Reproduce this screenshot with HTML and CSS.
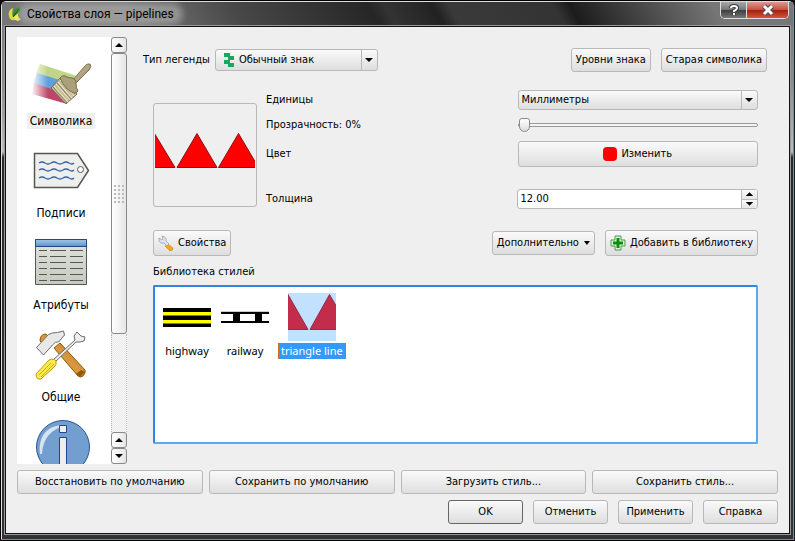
FILE: index.html
```html
<!DOCTYPE html>
<html lang="ru">
<head>
<meta charset="utf-8">
<title>Свойства слоя — pipelines</title>
<link rel="stylesheet" href="styles.css">
</head>
<body>
<div class="window">
  <header class="titlebar">
    <svg class="app-icon" viewBox="0 0 14 16"><path d="M5 2C2 3 0 6 1 10c0 3 3 5 6 4l3 1-1-4 2-5-3 1-2 4c-2 0-2-5-1-9z" fill="#d8e234"/><path d="M6 9l3-2 2 5 2 1-3 2-3-2z" fill="#eef25a"/><path d="M5 11C4 6 7 3 9 2l3-1v4c-1 2-4 4-7 6z" fill="#2e8b1e"/><path d="M5 11l6-8" stroke="#103c08"/></svg>
    <h1 class="title">Свойства слоя — pipelines</h1>
    <div class="caption-buttons">
      <button class="caption help" aria-label="Справка по окну"><svg viewBox="0 0 12 12"><path d="M3 4q0-2 3-2t3 2q0 1.500-3 3v1M6 9v2" fill="none" stroke="#333b48" stroke-width="4"/><path d="M3 4q0-2 3-2t3 2q0 1.500-3 3v1M6 9v2" fill="none" stroke="#fff" stroke-width="2"/></svg></button>
      <button class="caption close" aria-label="Закрыть"><svg viewBox="0 0 12 12"><path d="M2 2l8 8M10 2l-8 8" stroke="#4b4a5c" stroke-width="5"/><path d="M2 2l8 8M10 2l-8 8" stroke="#fff" stroke-width="3"/></svg></button>
    </div>
  </header>
  <div class="client">
    <div class="workspace">
      <div class="sidebar">
        <nav class="sections">
          <a class="section selected" href="#symbology">
            <svg viewBox="0 0 64 64">
              <defs><linearGradient id="fade"><stop offset="0" stop-color="#fff"/><stop offset="1" stop-color="#fff" stop-opacity="0"/></linearGradient><linearGradient id="handle" x1="0" y1="0" x2="1" y2="1"><stop offset="0" stop-color="#d2c6a2"/><stop offset="1" stop-color="#8f8564"/></linearGradient></defs>
              <path d="M11 18l37 12-11 10-30-13z" fill="#c0d587"/><path d="M8 27l26 8-10 11-20-8z" fill="#5e9fdd"/><path d="M5 37l20 7 13 14-35-10z" fill="#bd4768"/>
              <path d="M2 16h17v36H2z" fill="url(#fade)"/>
              <path d="M44 34l11-13q3-4 6-3 2 2-1 6L47 37z" fill="url(#handle)" stroke="#7b7154"/>
              <path d="M22 42l10-11 16 17-11 10z" fill="#c6bb96" stroke="#7b7154"/>
              <path d="M25 40l14 16M27 38l14 16M29 36l14 16M31 34l14 16" stroke="#f1ecd4"/><path d="M24 41l14 16M28 37l14 16" stroke="#8a8062"/>
              <path d="M31 32q3-4 7-1 3 1 6 1 4 3 3 6 0 4 2 7-2 3-4 2-9-3-14-15z" fill="#aaa07a" stroke="#756b4e"/>
            </svg><span>Символика</span>
          </a>
          <a class="section" href="#labels">
            <svg viewBox="0 0 64 64"><path d="M5.500 15.500h43l11 17-11 17h-43z" fill="#eeeeec" stroke="#555753" stroke-width="1.500"/><circle cx="51.500" cy="31.500" r="3" fill="#fff" stroke="#555753"/><path d="M10 25q3-2 6 0t6 0 6 0 6 0 6 0 5 0M10 32q3-2 6 0t6 0 6 0 6 0 6 0 5 0M10 40q3-2 6 0t6 0 6 0 6 0 6 0 5 0" fill="none" stroke="#3465a4" stroke-width="1.300"/></svg><span>Подписи</span>
          </a>
          <a class="section" href="#attributes">
            <svg viewBox="0 0 64 64"><defs><linearGradient id="tbl" x2="0" y2="1"><stop offset="0" stop-color="#e2e4de"/><stop offset="1" stop-color="#c6c9c0"/></linearGradient><linearGradient id="head" x2="0" y2="1"><stop offset="0" stop-color="#a4c6ea"/><stop offset="1" stop-color="#5a93cc"/></linearGradient></defs><path d="M6.500 9.500h51v45h-51z" fill="url(#tbl)" stroke="#555753"/><path d="M6.500 9.500h51v7h-51z" fill="url(#head)" stroke="#204a87"/><path d="M10 20.500h8m3 0h16m4 0h13M10 26.500h8m3 0h16m4 0h13M10 32.500h8m3 0h16m4 0h13M10 38.500h8m3 0h16m4 0h13M10 44.500h8m3 0h16m4 0h13M10 50.500h8m3 0h16m4 0h13" stroke="#555753"/></svg><span>Атрибуты</span>
          </a>
          <a class="section" href="#general">
            <svg viewBox="0 0 64 64"><defs><linearGradient id="wood" x1="0" y1="1" x2="1" y2="0"><stop offset="0" stop-color="#b06d12"/><stop offset=".5" stop-color="#d99843"/><stop offset="1" stop-color="#a9660c"/></linearGradient></defs><path d="M11 19q0-7 6-7l4 4-7 6zM25 26l6-5 25 27q1 3-2 6-3 2-5 0z" fill="url(#wood)" stroke="#8f5902"/><path d="M52 48l4 2-5 5-4-3z" fill="#8f5902"/><path d="M7.500 25.500l12-13q3-2 9-2l6-1.500 1 4-6 7q-3-1-6 3l-9 10z" fill="#e8e8e6" stroke="#6b6d69"/><path d="M24 38l22-20-1-4 3-4 4 4 4 1-1 4-4 1-4 0-21 20z" fill="#eeeeec" stroke="#6b6d69"/><path d="M7 52l13-14q5-2 7 1 1 4-2 6L12 57q-5 1-5-5z" fill="#fce94f" stroke="#c4a000"/><path d="M10 53l12-12M12 55l13-13" stroke="#d1b112"/></svg><span>Общие</span>
          </a>
          <a class="section" href="#metadata" aria-label="Метаданные">
            <svg viewBox="0 0 64 64"><circle cx="34" cy="33" r="26.500" fill="#729fcf" stroke="#2a5796"/><path d="M11 40C9 22 18 10 38 11 22 15 14 24 13 40z" fill="#d7e3ef"/><path d="M30.500 11.500h7v7h-7zM30.500 23.500h7v32h-7z" fill="#eeeeec" stroke="#204a87"/></svg>
          </a>
        </nav>
        <div class="scrollbar">
          <button class="step" aria-label="Вверх"><i class="arrow up"></i></button>
          <div class="thumb"><i class="grip"></i></div>
          <div class="track"></div>
          <button class="step" aria-label="Вверх"><i class="arrow up"></i></button>
          <button class="step" aria-label="Вниз"><i class="arrow"></i></button>
        </div>
      </div>
      <main class="panel">
        <div class="legend-row">
          <label for="legend">Тип легенды</label>
          <span class="combo legend-combo">
            <svg class="combo-icon" viewBox="0 0 12 16"><path d="M1 1h6v4H1zM5 4h6v4H5zM1 8h6v4H1zM5 11h6v4H5z" fill="#16a85c"/></svg>
            <select id="legend"><option>Обычный знак</option></select>
            <i class="arrow"></i>
          </span>
          <button class="btn first-action">Уровни знака</button>
          <button class="btn">Старая символика</button>
        </div>
        <div class="symbol">
          <div class="form">
            <div class="preview"><svg viewBox="0 0 100 100"><path d="M-21 62.500L-.5 28.500 20 62.500zM22 62.500l20-34 20 34zM63.500 62.500l20-34 20 34z" fill="red" stroke="#8a1414"/></svg></div>
            <label for="units">Единицы</label>
            <span class="combo inset"><select id="units"><option>Миллиметры</option></select><i class="arrow"></i></span>
            <label for="alpha">Прозрачность: 0%</label>
            <input class="slider inset" id="alpha" type="range" value="0">
            <label for="color">Цвет</label>
            <button class="btn tall inset" id="color"><i class="swatch"></i>Изменить</button>
            <label for="width">Толщина</label>
            <span class="spin"><input id="width" type="text" value="12.00"><span class="spin-buttons"><button aria-label="Больше"><i class="arrow up"></i></button><button aria-label="Меньше"><i class="arrow"></i></button></span></span>
          </div>
          <div class="actions">
            <button class="btn tall"><svg class="wrench" viewBox="0 0 16 16"><path d="M10 9l5 4q0 3-3 3L7 11z" fill="#f5a41c" stroke="#c9780e" stroke-width=".5"/><path d="M4 1l1 3-1 1-3-2q-1 4 2 5l3 0 3 3 2-2-3-3Q9 2 4 1z" fill="#dfe3ec" stroke="#8f97a8" stroke-width=".7"/></svg>Свойства</button>
            <button class="btn more">Дополнительно<i class="arrow small"></i></button>
            <button class="btn tall"><svg class="plus" viewBox="0 0 16 16"><path d="M5 1h6v4h4v6h-4v4H5v-4H1V5h4z" fill="#e2f2df" stroke="#4d9a4b" stroke-linejoin="round"/><path d="M6.500 3h3v3.500H13v3H9.500V13h-3V9.500H3v-3h3.500z" fill="#0c8f0c"/></svg>Добавить в библиотеку</button>
          </div>
          <h2 class="library-title">Библиотека стилей</h2>
          <ul class="library">
            <li><svg viewBox="0 0 48 48"><path d="M0 15h48v19H0z"/><path d="M0 19h48v3H0zM0 27h48v3H0z" fill="#ff0"/><path d="M0 22h48v1H0zM0 30h48v1H0z" fill="#7f7f00"/></svg><span>highway</span></li>
            <li><svg viewBox="0 0 48 48"><path d="M0 18h48v1H0z" fill="#ccc"/><path d="M0 19h48v2H0zM0 28h48v2H0zM12 20h7v9h-7zM34 20h7v9h-7z"/></svg><span>railway</span></li>
            <li class="selected"><svg viewBox="0 0 48 48"><path d="M0 0h48v48H0z" fill="#c2e0ff"/><path d="M-20 36.500L0 1.500l20 35zM22 36.500L41.500 1.500 62 36.500z" fill="#c32d4b" stroke="#88334f"/></svg><span>triangle line</span></li>
          </ul>
        </div>
      </main>
    </div>
    <div class="style-buttons">
      <button class="btn">Восстановить по умолчанию</button>
      <button class="btn">Сохранить по умолчанию</button>
      <button class="btn">Загрузить стиль...</button>
      <button class="btn">Сохранить стиль...</button>
    </div>
    <div class="dialog-buttons">
      <button class="btn default">OK</button>
      <button class="btn">Отменить</button>
      <button class="btn">Применить</button>
      <button class="btn">Справка</button>
    </div>
  </div>
</div>
</body>
</html>
```
FILE: styles.css
```css
* { box-sizing: border-box; }

body {
  margin: 0;
  background: #101010;
  color: #000;
  font: 11px/16px "DejaVu Sans Condensed", "DejaVu Sans", sans-serif;
}

button, input, select { font: inherit; color: inherit; }
svg { display: block; flex: none; overflow: hidden; }

.window {
  display: flex;
  flex-direction: column;
  height: 100vh;
  padding: 0 4px 6px;
  border: 1px solid #000;
  border-right-color: #123;
  border-radius: 6px 6px 0 0;
  background: linear-gradient(#777, #8c8c8c 15%, #bbb 28%, #2a2a2a 29%, #333);
  box-shadow: inset -1px -1px #35a5bd, inset 1px 1px #ddd;
}

.titlebar {
  display: flex;
  flex: none;
  align-items: center;
  height: 24px;
  margin: 1px -3px 0;
  padding-left: 6px;
  background: linear-gradient(60deg, #777 0, #777 17%, #484848 30%, #262626 47%, #333 49%, #222 55%, #3a3a3a 57%, #333 70%, #1c1c1c 72%, #777 90%, #777 100%);
}

.app-icon { width: 14px; height: 16px; }

.title {
  margin: 0;
  padding: 0 5px;
  border-radius: 8px;
  background: rgb(190 190 190 / 50%);
  box-shadow: 0 0 6px 4px rgb(190 190 190 / 50%);
  font: 12px/14px Roboto, sans-serif;
}

.caption-buttons {
  display: flex;
  align-self: flex-start;
  margin-left: auto;
  margin-right: 4px;
  border: 1px solid #ddd;
  border-top: 0;
  border-radius: 0 0 5px 5px;
  overflow: hidden;
}

.caption {
  display: flex;
  align-items: center;
  justify-content: center;
  width: 25px;
  height: 16px;
  padding: 0;
  border: 0;
  background: linear-gradient(#a8a8a8, #777 48%, #3b3b3b 50%, #777);
}

.caption.close {
  width: 42px;
  border-left: 1px solid #ddd;
  background: linear-gradient(#dc9a8d, #c4513f 48%, #a21f0c 50%, #d2553a);
}

.caption svg { width: 12px; height: 12px; }

.client {
  display: flex;
  flex: 1;
  flex-direction: column;
  gap: 6px;
  min-height: 0;
  padding: 10px 11px 9px;
  border: 1px solid #111;
  background: #efefef;
  box-shadow: 0 0 0 1px #999;
}

.workspace { display: flex; flex: 1; min-height: 0; }
.sidebar { display: flex; flex: none; width: 110px; }

.sections {
  display: flex;
  flex: 1;
  flex-direction: column;
  align-items: center;
  gap: 9px;
  padding: 9px 6px 0 0;
  background: #fff;
  overflow: hidden;
}

.section {
  display: flex;
  flex: none;
  flex-direction: column;
  align-items: center;
  gap: 3px;
  color: inherit;
  text-decoration: none;
}

.section svg { width: 64px; height: 64px; }
.section span { padding: 0 3px; font-size: 12px; }
.section.selected span { background: #efefef; }

.scrollbar { display: flex; flex: none; flex-direction: column; width: 16px; }

.step, .thumb {
  display: flex;
  align-items: center;
  justify-content: center;
  padding: 0;
  border: 1px solid #888;
  border-radius: 3px;
  background: linear-gradient(90deg, #fff, #e6e6e6);
}

.step { flex: none; height: 16px; }
.thumb { flex: 280; }

.track {
  flex: 98;
  border: 1px dotted #bbb;
  border-width: 0 1px;
  background: repeating-conic-gradient(#eaeaea 0 25%, #f8f8f8 0 50%) 0 0 / 2px 2px;
}

.grip {
  width: 12px;
  height: 20px;
  background: radial-gradient(circle, #bbb 1px, transparent 1px) 0 0 / 4px 4px;
}

.arrow {
  flex: none;
  width: 8px;
  height: 4px;
  background: #000;
  clip-path: polygon(0 0, 100% 0, 50% 100%);
}

.arrow.up { clip-path: polygon(0 100%, 100% 100%, 50% 0); }
.arrow.small { width: 6px; height: 4px; }

.panel {
  display: flex;
  flex: 1;
  flex-direction: column;
  gap: 18px;
  min-width: 0;
  padding: 11px 11px 20px 16px;
}

.legend-row { display: flex; align-items: center; gap: 10px; }
.legend-row label { margin-right: -5px; }
.first-action { margin-left: auto; }

.btn {
  display: flex;
  align-items: center;
  justify-content: center;
  height: 24px;
  padding: 0 4px;
  border: 1px solid #b8b8b8;
  border-radius: 3px;
  background: linear-gradient(#fafafa, #dedede);
  white-space: nowrap;
}

.btn.tall { height: 26px; gap: 4px; }

.combo {
  position: relative;
  display: flex;
  align-items: center;
  height: 20px;
  border: 1px solid #b8b8b8;
  border-radius: 3px;
  background: linear-gradient(#fafafa, #dedede);
}

.combo select {
  flex: 1;
  align-self: stretch;
  min-width: 0;
  padding: 0 20px 0 3px;
  border: 0;
  background: none;
  appearance: none;
}

.combo::after {
  content: "";
  position: absolute;
  inset: 0 15px 0 auto;
  border-left: 1px solid #b8b8b8;
}

.combo .arrow { position: absolute; right: 4px; }
.legend-combo { width: 163px; height: 22px; }
.combo-icon { width: 12px; height: 16px; margin: 0 1px 0 7px; }

.symbol {
  display: flex;
  flex: 1;
  flex-direction: column;
  min-height: 0;
  padding: 0 9px 0 10px;
}

.form {
  display: grid;
  grid-template: 20px 30px 28px 62px / 104px 1fr 1fr;
  align-items: center;
  column-gap: 9px;
}

.preview {
  grid-row: 1 / -1;
  height: 104px;
  margin-bottom: 10px;
  padding: 1px;
  border: 1px solid #b8b8b8;
  border-radius: 3px;
}

.preview svg { width: 100px; height: 100px; }
.inset { margin-left: 1px; }

.slider {
  height: 14px;
  margin-top: 0;
  margin-right: 0;
  margin-bottom: 0;
  background: none;
  appearance: none;
}

.slider::-webkit-slider-runnable-track {
  height: 4px;
  border: 1px solid #999;
  border-radius: 2px;
  background: #f4f4f4;
}

.slider::-webkit-slider-thumb {
  width: 11px;
  height: 14px;
  margin-top: -6px;
  background: linear-gradient(#fff, #ddd);
  border: 1px solid #888;
  border-radius: 3px 3px 6px 6px;
  appearance: none;
}

.swatch { width: 14px; height: 14px; border-radius: 4px; background: red; }

.spin {
  display: flex;
  height: 20px;
  border: 1px solid #b8b8b8;
  border-radius: 3px;
  background: #fff;
  overflow: hidden;
}

.spin input {
  flex: 1;
  min-width: 0;
  padding: 0 3px;
  border: 0;
  background: none;
}

.spin-buttons { display: flex; flex-direction: column; width: 16px; border-left: 1px solid #b8b8b8; }

.spin-buttons button {
  display: flex;
  flex: 1;
  align-items: center;
  justify-content: center;
  padding: 0;
  border: 0;
  background: linear-gradient(#fafafa, #e6e6e6);
}

.spin-buttons button + button { border-top: 1px solid #b8b8b8; }

.actions { display: flex; align-items: center; gap: 10px; }
.actions .more { gap: 5px; margin-left: auto; }
.wrench, .plus { width: 16px; height: 16px; }

.library-title { margin: 8px 0 5px; font: inherit; }

.library {
  display: flex;
  flex: 1;
  gap: 8px;
  min-height: 0;
  margin: 0;
  padding: 6px 7px;
  border: 2px solid #2e86e0;
  border-color: #2e86e0 #5aa9f4 #5aa9f4 #2e86e0;
  border-radius: 2px;
  background: #fff;
  list-style: none;
}

.library li { display: flex; flex-direction: column; align-items: center; gap: 2px; min-width: 50px; }
.library svg { width: 48px; height: 48px; }
.library span { padding: 0 2px; border: 1px solid transparent; font: 11px/14px "Noto Sans", sans-serif; }
.library .selected span { border: 1px dotted #d07020; background: #3399ff; color: #fff; }

.style-buttons { display: grid; grid-template-columns: repeat(4, 1fr); gap: 6px; }
.dialog-buttons { display: flex; justify-content: flex-end; gap: 10px; }
.dialog-buttons .btn { width: 75px; }
.btn.default { border-color: #666; }
```
